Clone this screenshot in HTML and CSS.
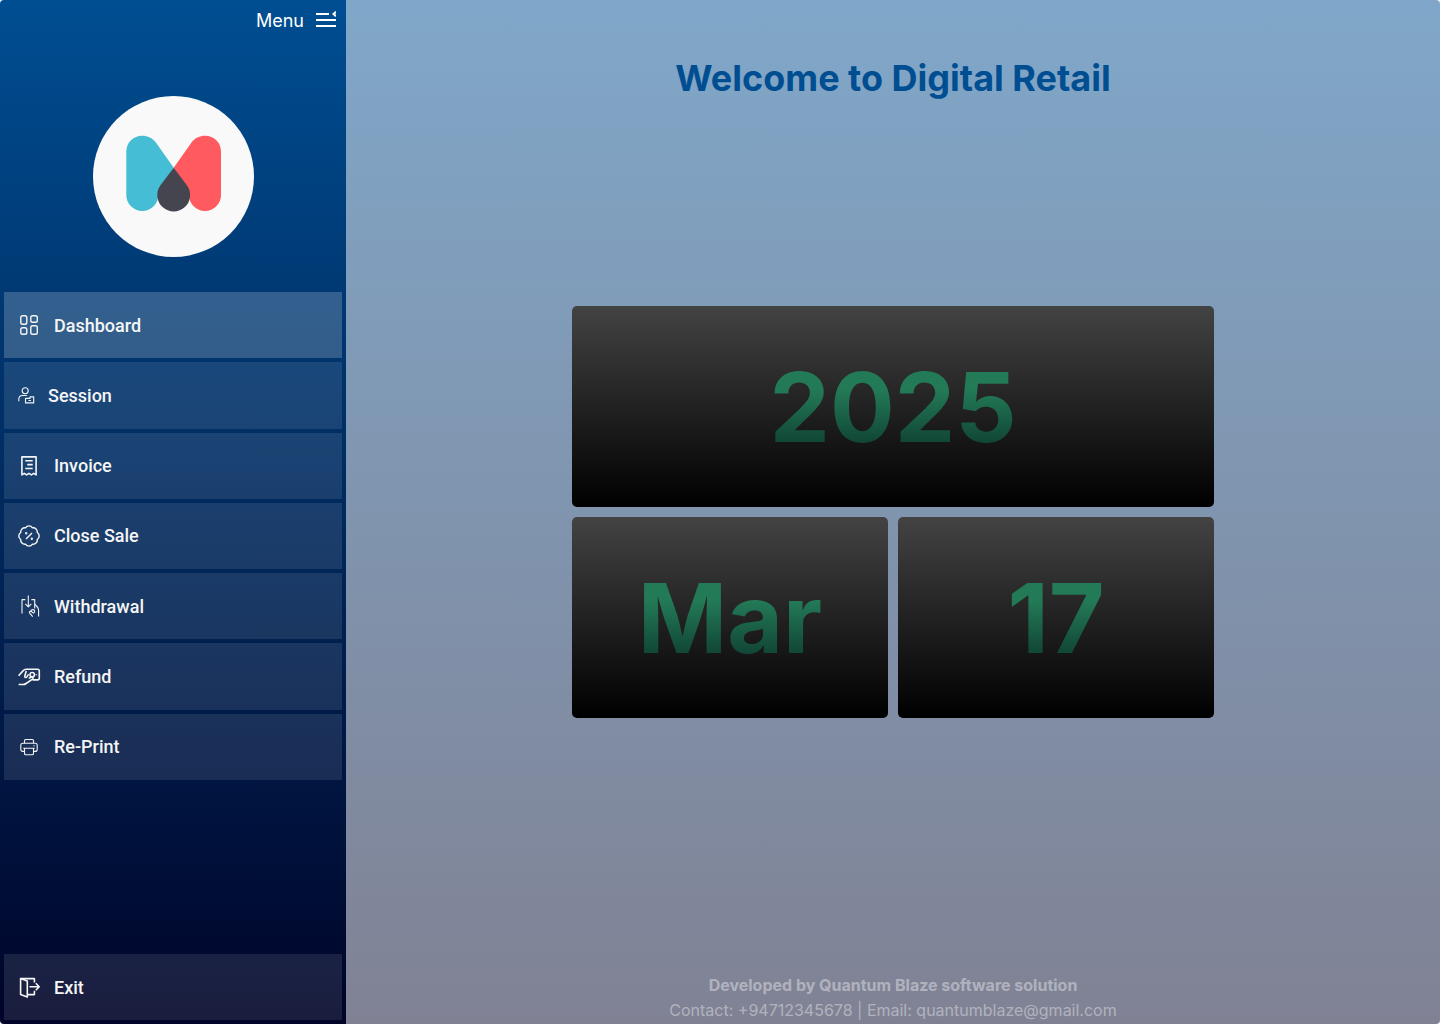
FILE: index.html
```html
<!DOCTYPE html>
<html lang="en">
<head>
  <meta charset="utf-8">
  <meta name="viewport" content="width=device-width, initial-scale=1">
  <title>Digital Retail</title>
  <link rel="stylesheet" href="styles.css">
</head>
<body>
  <div class="app">
    <aside class="sidebar">
      <button class="menu-toggle" type="button">
        <span class="label">Menu</span>
        <svg class="menu-icon" viewBox="0 0 20 18" aria-hidden="true">
          <path d="M0 3h13M0 9h20M0 15h20"/>
          <path d="M20 .8 17.500 3 20 5.200"/>
        </svg>
      </button>

      <svg class="logo" viewBox="0 0 161 161" role="img" aria-label="Company logo">
        <circle cx="80.5" cy="80.5" r="80.5" fill="#f9f9f9"/>
        <path fill="#45bdd5" d="M33.3 55.600a15.900 15.900 0 0 1 15.900-15.900c5.400 0 10.200 2.200 13.500 6.500L80.700 71.700 65.300 99a16 16 0 0 1-32 0z"/>
        <path fill="#ff5a60" d="M128 55.600A15.900 15.900 0 0 0 112.100 39.700c-5.400 0-10.200 2.200-13.400 6.500L80.700 71.700 96 99a16 16 0 0 0 32 0z"/>
        <path fill="#454550" d="M80.700 71.700 67.300 89.600a16.400 16.400 0 1 0 26.800 0z"/>
      </svg>

      <nav class="nav" aria-label="Main">
        <a class="nav-item is-active" href="#dashboard" aria-current="page">
          <svg class="icon" viewBox="0 0 22 22" aria-hidden="true">
            <rect x="2.800" y="1.800" width="6" height="8.500" rx="1.800"/>
            <rect x="12.800" y="1.800" width="6.500" height="6.500" rx="1.800"/>
            <rect x="2.800" y="13.800" width="6" height="6.500" rx="1.800"/>
            <rect x="12.800" y="11.800" width="6.500" height="8.500" rx="1.800"/>
          </svg>
          <span class="label">Dashboard</span>
        </a>
        <a class="nav-item" href="#session">
          <svg class="icon icon-small" viewBox="0 0 16 16" aria-hidden="true">
            <circle cx="7.200" cy="3.800" r="3"/>
            <path d="M.8 14.200v-2c0-2.200 1.600-3.700 3.800-3.700h4.200"/>
            <path d="M7.500 11v4.900h8.200V9.900H12v1.500H7.500M10.500 13.500h2.500"/>
          </svg>
          <span class="label">Session</span>
        </a>
        <a class="nav-item" href="#invoice">
          <svg class="icon icon-bold" viewBox="0 0 22 22" aria-hidden="true">
            <path d="M3.900 1.900h14.200v18l-2.400-1.500-2.300 1.500-2.400-1.500-2.400 1.500-2.300-1.500-2.400 1.500z"/>
            <path d="M7.300 5.700h7.400M9.200 9.600h5.500M7.300 13.500h7.400"/>
          </svg>
          <span class="label">Invoice</span>
        </a>
        <a class="nav-item" href="#close-sale">
          <svg class="icon" viewBox="0 0 22 22" aria-hidden="true">
            <path d="M7.500 2.800a4.200 4.200 0 0 1 7 0a4.200 4.200 0 0 1 4.800 4.700a4.200 4.200 0 0 1 0 7a4.200 4.200 0 0 1-4.800 4.700a4.200 4.200 0 0 1-7 0a4.200 4.200 0 0 1-4.800-4.700a4.200 4.200 0 0 1 0-7a4.200 4.200 0 0 1 4.800-4.700z"/>
            <path d="m8 14 6-6"/>
            <circle cx="8.200" cy="8.300" r=".5"/>
            <circle cx="13.800" cy="13.700" r=".5"/>
          </svg>
          <span class="label">Close Sale</span>
        </a>
        <a class="nav-item" href="#withdrawal">
          <svg class="icon icon-thin" viewBox="0 0 22 22" aria-hidden="true">
            <path d="M7.300 4.600H4v14M10.300.4v11.300M7.300 8.800l3 3 3-3M13.400 4.600h3.300v8.800"/>
            <path d="M16.700 9.300c2 1.600 3.900 3.700 3.900 6.200v6M14.700 21.600l-3-3.500c-1-1.300.6-2.500 1.700-1.600l1.600 1.400M12.800 16.200c.4-1.800 3-2.200 3.700-.6.500 1.200-.3 2.300-1.500 2.700"/>
          </svg>
          <span class="label">Withdrawal</span>
        </a>
        <a class="nav-item" href="#refund">
          <svg class="icon icon-bold" viewBox="0 0 22 22" aria-hidden="true">
            <path d="M.6 9.800 5.200 4.600C6 3.800 7 3.300 8.200 3.300h11.300c1.200 0 1.800.6 1.800 1.800v7c0 1.200-.6 1.800-1.800 1.800h-5"/>
            <path d="M.6 18.500h4.600c1.200 0 2-.3 2.900-1l6.400-4.400c1.300-1-.1-2.800-1.500-1.900l-2.300 1.200M8.300 5l-1.500 4.800c-.5 1.700 1.300 2.300 2.200.8l1-1.800"/>
            <circle cx="14.200" cy="8.700" r="2.200"/>
            <path d="M10.400 8.200v1M18.300 8.200v1"/>
          </svg>
          <span class="label">Refund</span>
        </a>
        <a class="nav-item" href="#re-print">
          <svg class="icon icon-thin" viewBox="0 0 22 22" aria-hidden="true">
            <path d="M6.500 7.300V4.800c0-.8.500-1.300 1.300-1.300h6.400c.8 0 1.300.5 1.300 1.300v2.500"/>
            <path d="M6.500 15.400H4.800c-1.300 0-2-.7-2-2V9.300c0-1.300.7-2 2-2h12.400c1.300 0 2 .7 2 2v4.100c0 1.300-.7 2-2 2h-1.700"/>
            <path d="M5.300 12.200h11.400M6.500 12.200v5.300c0 .8.500 1.300 1.300 1.300h6.400c.8 0 1.300-.5 1.300-1.300v-5.300M15.400 9.700h1.300"/>
          </svg>
          <span class="label">Re-Print</span>
        </a>
      </nav>

      <a class="nav-item nav-exit" href="#exit">
        <svg class="icon icon-bold" viewBox="0 0 22 22" aria-hidden="true">
          <path d="m2.600 2.600 6.700 2.500v16l-6.700-2.500z"/>
          <path d="M2.600 2.600h13.800v4M16.400 14.800v3.800H9.300M11.500 10.700h9.600M17.800 7.200l3.400 3.500-3.400 3.500"/>
        </svg>
        <span class="label">Exit</span>
      </a>
    </aside>

    <main class="main">
      <h1 class="title">Welcome to Digital Retail</h1>
      <section class="date" aria-label="Today's date">
        <div class="card card-year"><span class="value">2025</span></div>
        <div class="card"><span class="value">Mar</span></div>
        <div class="card"><span class="value">17</span></div>
      </section>
      <footer class="footer">
        <strong>Developed by Quantum Blaze software solution</strong>
        <span>Contact: +94712345678 | Email: quantumblaze@gmail.com</span>
      </footer>
    </main>
  </div>
</body>
</html>
```

FILE: styles.css
```css
* {
  box-sizing: border-box;
}

body {
  margin: 0;
  background: #fff;
  font-family: Inter, "Liberation Sans", sans-serif;
}

.app {
  display: grid;
  grid-template-columns: 346px 1fr;
  min-height: 100vh;
  border-radius: 4px;
  overflow: hidden;
}

.sidebar {
  display: flex;
  flex-direction: column;
  padding: 0 4px 4px;
  background: linear-gradient(#004e92, #000428);
  color: #fff;
}

.menu-toggle {
  display: flex;
  align-items: center;
  align-self: flex-end;
  gap: 12px;
  height: 40px;
  padding: 0 6px;
  border: 0;
  background: none;
  color: inherit;
  font: 400 18px/22px Inter, "Liberation Sans", sans-serif;
  cursor: pointer;
}

.label {
  padding-top: 1px;
}

.menu-icon {
  width: 20px;
  height: 18px;
  fill: none;
  stroke: #fff;
  stroke-width: 2;
}

.logo {
  align-self: center;
  width: 161px;
  height: 161px;
  margin: 56px 0 35px;
}

.nav {
  display: grid;
  grid-auto-rows: 1fr;
  gap: 4px;
  min-height: 488px;
}

.nav-item {
  display: flex;
  align-items: center;
  gap: 14px;
  min-height: 66px;
  padding: 0 14px;
  background: rgba(255, 255, 255, 0.1);
  color: #f5f5f5;
  font: 500 18px/22px Roboto, "Liberation Sans", sans-serif;
  text-decoration: none;
}

.nav-item.is-active {
  background: rgba(255, 255, 255, 0.2);
}

.nav-exit {
  margin-top: auto;
}

.icon {
  flex: none;
  width: 22px;
  height: 22px;
  fill: none;
  stroke: #f5f5f5;
  stroke-width: 1.4;
  stroke-linejoin: round;
  overflow: visible;
}

.icon-small {
  width: 16px;
  height: 16px;
  stroke-width: 1.1;
}

.icon-thin {
  stroke-width: 1.1;
}

.icon-bold {
  stroke-width: 1.6;
}

.main {
  display: grid;
  grid-template-rows: 1fr auto 1fr;
  justify-items: center;
  padding: 0 24px;
  background: linear-gradient(#80a7c9, #808294);
  text-align: center;
}

.title {
  margin: 56px 0 0;
  color: #004e92;
  font-size: 36px;
  font-weight: 700;
  line-height: 44px;
}

.date {
  display: grid;
  grid-template-columns: 1fr 1fr;
  gap: 10px;
  width: 100%;
  max-width: 642px;
}

.card {
  display: flex;
  align-items: center;
  justify-content: center;
  min-height: 201px;
  border-radius: 5px;
  background: linear-gradient(#434343, #000);
}

.card-year {
  grid-column: 1 / -1;
}

.value {
  background: linear-gradient(#237a57 35%, #093028);
  background-clip: text;
  -webkit-background-clip: text;
  color: transparent;
  font-size: 96px;
  font-weight: 700;
  line-height: 116px;
}

.footer {
  display: flex;
  flex-direction: column;
  align-self: end;
  padding-bottom: 1px;
  color: rgba(255, 255, 255, 0.4);
  font-size: 16px;
  line-height: 25px;
}
```
